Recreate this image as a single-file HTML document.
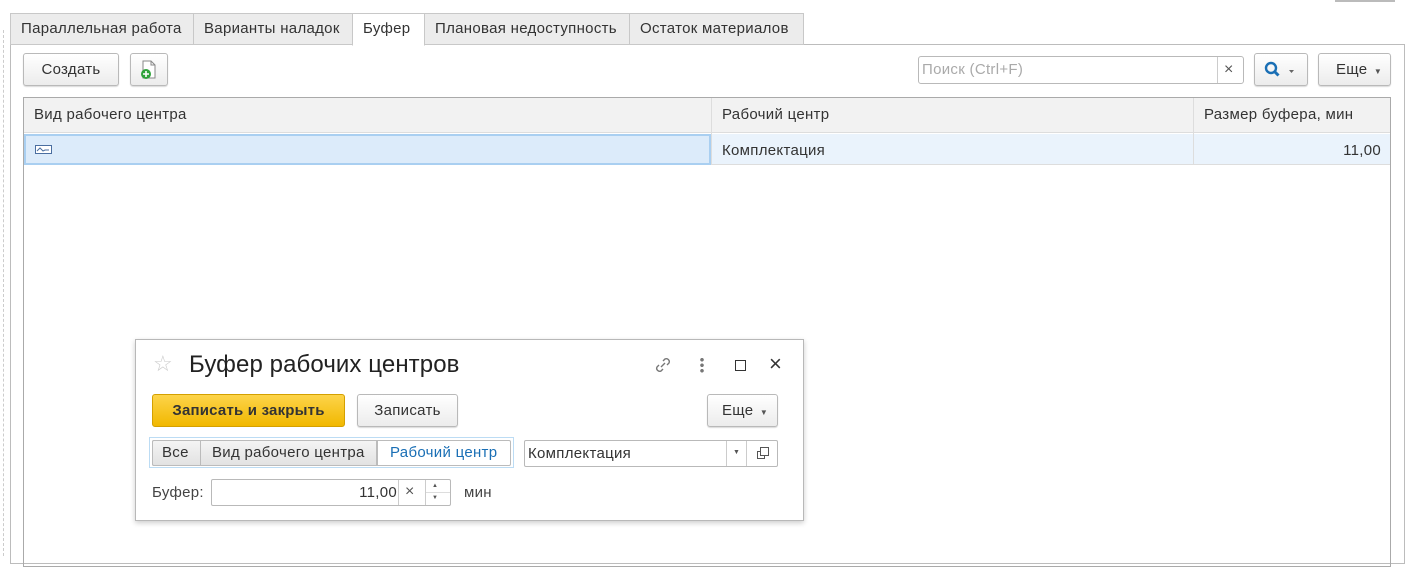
<!DOCTYPE html>
<html><head><meta charset="utf-8"><style>
*{box-sizing:border-box;margin:0;padding:0}
body{width:1424px;height:556px;background:#fff;font-family:"Liberation Sans",sans-serif;font-size:15px;letter-spacing:0.3px;color:#333;position:relative;overflow:hidden}
.a{position:absolute}
.tab{position:absolute;top:13px;height:32px;border:1px solid #c8c8c8;background:#ececec;line-height:29px;padding-left:10px;color:#333;white-space:nowrap}
.btn{position:absolute;border:1px solid #b9b9b9;border-radius:3px;background:linear-gradient(#fff,#ececec);box-shadow:0 1px 1px rgba(0,0,0,.15);text-align:center;color:#333;white-space:nowrap}
.v{position:absolute;top:0;bottom:0;width:1px;background:#ddd}
</style></head><body>
<div class="a" style="left:3px;top:30px;height:526px;border-left:1px dashed #ccc"></div>
<div class="a" style="left:1335px;top:0;width:60px;height:2px;background:#bbb"></div>
<div class="a" style="left:10px;top:44px;width:1395px;height:520px;border:1px solid #bcbcbc"></div>
<div class="tab" style="left:10px;width:184px">Параллельная работа</div>
<div class="tab" style="left:193px;width:160px">Варианты наладок</div>
<div class="tab" style="left:352px;width:73px;background:#fff;border-bottom-color:#fff;height:33px">Буфер</div>
<div class="tab" style="left:424px;width:206px">Плановая недоступность</div>
<div class="tab" style="left:629px;width:175px">Остаток материалов</div>

<div class="btn" style="left:23px;top:53px;width:96px;height:33px;line-height:31px">Создать</div>
<div class="btn" style="left:130px;top:53px;width:38px;height:33px">
<svg width="20" height="22" viewBox="0 0 20 22" style="margin-top:5px"><path d="M4 2h8l4 4v13H4z" fill="#fff" stroke="#888"/><path d="M12 2v4h4" fill="none" stroke="#888"/><circle cx="7" cy="15" r="5" fill="#2fa33a"/><path d="M7 12v6M4 15h6" stroke="#fff" stroke-width="1.6"/></svg></div>

<div class="a" style="left:918px;top:56px;width:326px;height:28px;border:1px solid #b9b9b9;border-radius:3px;color:#aaa;line-height:26px;padding-left:3px">Поиск (Ctrl+F)</div>
<div class="a" style="left:1217px;top:57px;width:1px;height:26px;background:#ccc"></div>
<div class="a" style="left:1224px;top:58px;color:#555;font-size:16px;line-height:24px">×</div>
<div class="btn" style="left:1254px;top:53px;width:54px;height:33px">
<svg width="40" height="20" viewBox="0 0 40 20" style="margin-top:6px"><circle cx="10" cy="8" r="5" fill="none" stroke="#1a6fb5" stroke-width="2.4"/><path d="M13.5 11.5l4 4" stroke="#1a6fb5" stroke-width="3"/><path d="M28 10h5l-2.5 3z" fill="#666"/></svg></div>
<div class="btn" style="left:1318px;top:53px;width:73px;height:33px;line-height:31px;text-align:left;padding-left:17px">Еще <span style="font-size:8px;margin-left:2px;color:#555">▼</span></div>

<div class="a" style="left:23px;top:97px;width:1368px;height:470px;border:1px solid #aaa">
 <div class="a" style="left:0;top:0;width:1366px;height:35px;background:#f2f2f2;border-bottom:1px solid #ddd"></div>
 <div class="a" style="left:0;top:36px;width:1366px;height:31px;background:#eaf3fc;border-bottom:1px solid #ddd"></div>
 <div class="a" style="left:0;top:36px;width:687px;height:31px;background:#dcebfa;border:2px solid #a9cff1"></div>
 <div class="v" style="left:687px;height:67px"></div>
 <div class="v" style="left:1169px;height:67px"></div>
 <div class="a" style="left:10px;top:8px">Вид рабочего центра</div>
 <div class="a" style="left:698px;top:8px">Рабочий центр</div>
 <div class="a" style="left:1180px;top:8px">Размер буфера, мин</div>
 <svg class="a" style="left:11px;top:47px" width="18" height="10"><rect x="0.5" y="0.5" width="16" height="8" fill="#fff" stroke="#4a6ea0"/><path d="M2 6l3-3 3 3 2-1h4" stroke="#4a6ea0" fill="none"/></svg>
 <div class="a" style="left:698px;top:44px">Комплектация</div>
 <div class="a" style="right:9px;top:44px">11,00</div>
</div>

<div class="a" style="left:135px;top:339px;width:669px;height:182px;border:1px solid #b8b8b8;background:#fff;box-shadow:0 2px 5px rgba(0,0,0,.2)">
 <div class="a" style="left:17px;top:11px;font-size:22px;color:#ccc">☆</div>
 <div class="a" style="left:53px;top:11px;font-size:24px;letter-spacing:0.1px;color:#222;white-space:nowrap">Буфер рабочих центров</div>
 <svg class="a" style="left:516px;top:14px" width="22" height="22" viewBox="0 0 22 22"><path d="M9 13l4-4M7 11l-2 2a3 3 0 004 4l2-2M15 11l2-2a3 3 0 00-4-4l-2 2" fill="none" stroke="#777" stroke-width="1.4"/></svg>
 <div class="a" style="left:564px;top:17px;width:4px;height:16px;background:radial-gradient(circle,#777 1.6px,transparent 2px) 0 0/4px 5.5px"></div>
 <div class="a" style="left:599px;top:20px;width:11px;height:11px;border:1.5px solid #333"></div>
 <div class="a" style="left:633px;top:12px;font-size:22px;color:#333;line-height:24px">×</div>
 <div class="a" style="left:16px;top:54px;width:193px;height:33px;border:1px solid #d4a000;border-radius:3px;background:linear-gradient(#fdd44a,#f1b800);font-weight:bold;text-align:center;line-height:31px;color:#333;white-space:nowrap;letter-spacing:0.2px">Записать и закрыть</div>
 <div class="btn" style="left:221px;top:54px;width:101px;height:33px;line-height:31px">Записать</div>
 <div class="btn" style="left:571px;top:54px;width:71px;height:33px;line-height:31px;text-align:left;padding-left:14px">Еще <span style="font-size:8px;margin-left:2px;color:#555">▼</span></div>
 <div class="a" style="left:13px;top:97px;width:365px;height:31px;border:1px solid #bcdcf4"></div>
 <div class="a" style="left:16px;top:100px;width:359px;height:26px;border:1px solid #bbb;border-radius:2px;background:#fff"></div>
 <div class="a" style="left:16px;top:100px;width:225px;height:26px;background:linear-gradient(#f4f4f4,#e2e2e2);border:1px solid #bbb;border-radius:2px 0 0 2px"></div>
 <div class="a" style="left:64px;top:101px;width:1px;height:24px;background:#bbb"></div>
 <div class="a" style="left:241px;top:101px;width:1px;height:24px;background:#bbb"></div>
 <div class="a" style="left:26px;top:104px">Все</div>
 <div class="a" style="left:76px;top:104px;white-space:nowrap">Вид рабочего центра</div>
 <div class="a" style="left:254px;top:104px;color:#1a6fb5;white-space:nowrap">Рабочий центр</div>
 <div class="a" style="left:388px;top:100px;width:254px;height:27px;border:1px solid #b9b9b9;border-radius:2px;line-height:25px;padding-left:3px">Комплектация</div>
 <div class="a" style="left:590px;top:101px;width:1px;height:25px;background:#ccc"></div>
 <div class="a" style="left:610px;top:101px;width:1px;height:25px;background:#ccc"></div>
 <div class="a" style="left:597px;top:109px;font-size:7px;color:#555">▼</div>
 <svg class="a" style="left:620px;top:106px" width="14" height="14"><rect x="4.5" y="1.5" width="8" height="8" fill="none" stroke="#555"/><path d="M4.5 5.5h-3v7h7v-3" fill="none" stroke="#555"/></svg>
 <div class="a" style="left:16px;top:144px;color:#444">Буфер:</div>
 <div class="a" style="left:75px;top:139px;width:240px;height:27px;border:1px solid #b9b9b9;border-radius:2px"></div>
 <div class="a" style="left:180px;top:144px;width:81px;text-align:right">11,00</div>
 <div class="a" style="left:262px;top:140px;width:1px;height:25px;background:#ccc"></div>
 <div class="a" style="left:289px;top:140px;width:1px;height:25px;background:#ccc"></div>
 <div class="a" style="left:269px;top:143px;font-size:16px;color:#555">×</div>
 <div class="a" style="left:296px;top:140px;font-size:6px;color:#555;line-height:12px">▲<br>▼</div>
 <div class="a" style="left:290px;top:152px;width:24px;height:1px;background:#ddd"></div>
 <div class="a" style="left:328px;top:144px;color:#444">мин</div>
</div>
</body></html>
